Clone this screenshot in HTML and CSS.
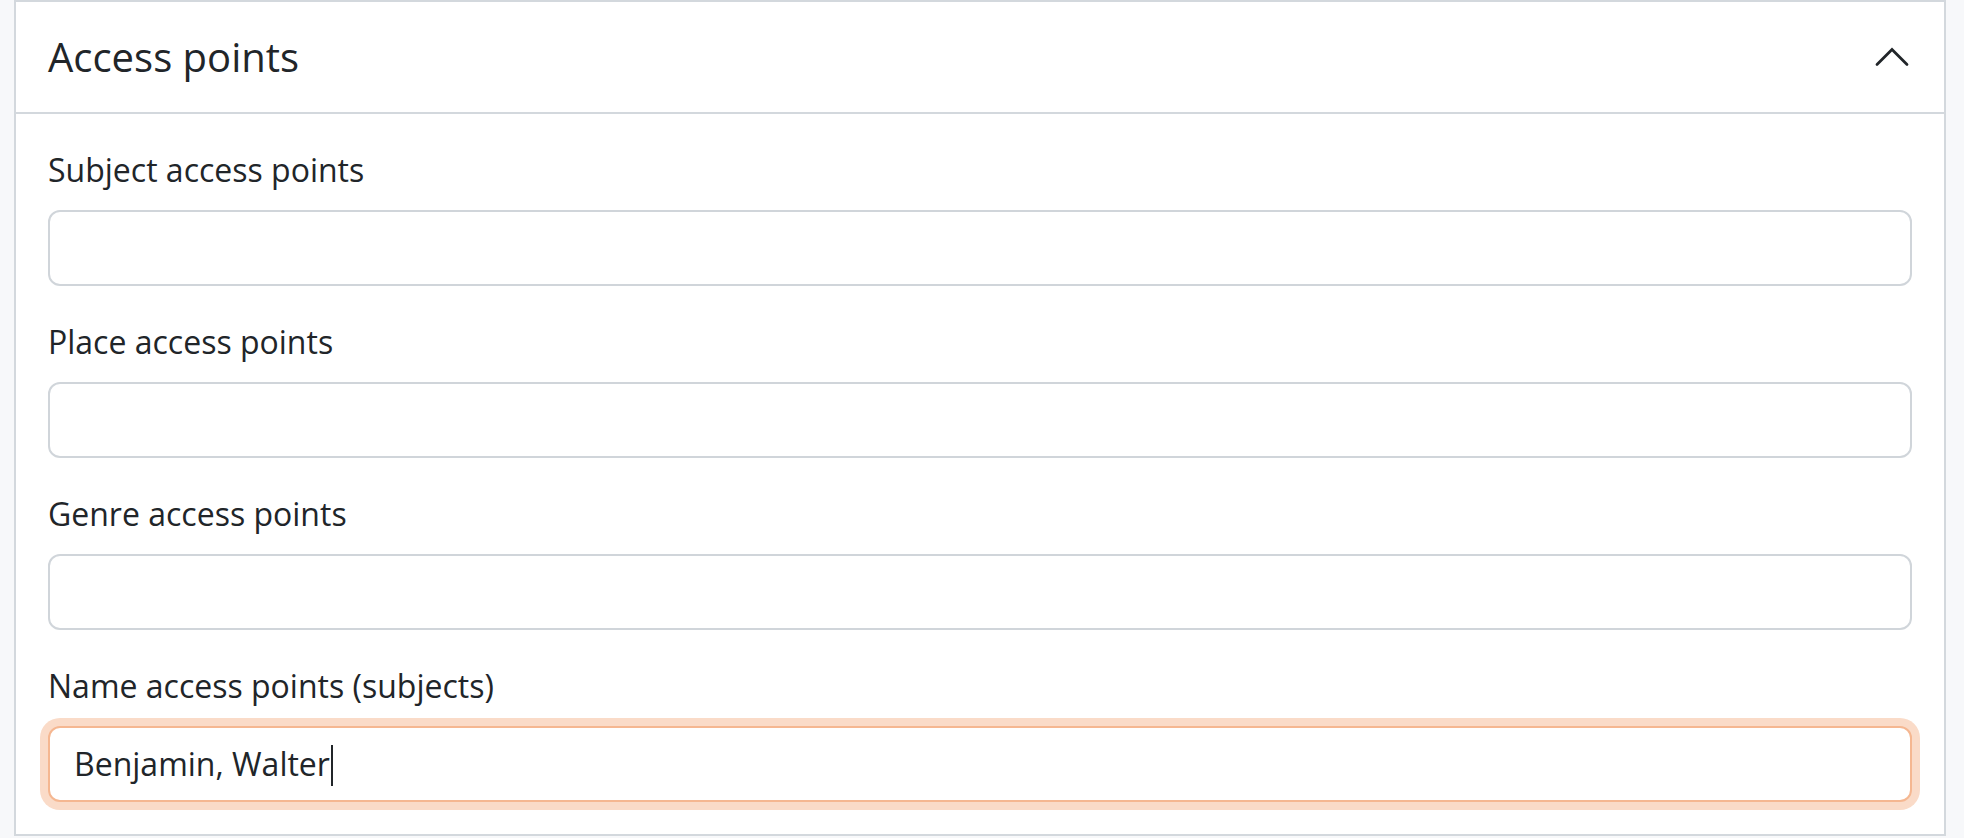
FILE: index.html
```html
<!DOCTYPE html>
<html lang="en">

<head>
    <meta charset="UTF-8">
    <meta name="viewport" content="width=device-width, initial-scale=1.0">
    <title>Access points</title>

    <link rel="stylesheet" href="styles.css">
</head>

<body>
    <!-- Access points section -->
    <section class="panel">
        <div class="panel-header">
            <h2 class="panel-title">Access points</h2>
            <svg class="chevron" viewBox="0 0 16 16" aria-hidden="true">
                <path d="M2 11L8 5L14 11" fill="none" stroke="#212529" stroke-width="1.1" stroke-linecap="round" stroke-linejoin="miter"/>
            </svg>
        </div>

        <div class="panel-body">
            <div class="field">
                <label for="subjects">Subject access points</label>
                <input type="text" id="subjects" class="form-control">
            </div>
            <div class="field">
                <label for="places">Place access points</label>
                <input type="text" id="places" class="form-control">
            </div>
            <div class="field">
                <label for="genres">Genre access points</label>
                <input type="text" id="genres" class="form-control">
            </div>
            <div class="field">
                <label for="names">Name access points (subjects)</label>
                <div id="names" class="form-control focused">Benjamin, Walter<span class="caret"></span></div>
            </div>
        </div>
    </section>
</body>

</html>
```

FILE: styles.css
```css
    body {
        margin: 0;
        padding: 0 18px 0 14px;
        background-color: #f7f8fa;
        font-family: 'Open Sans', 'Noto Sans', sans-serif;
        color: #212529;
    }

    .panel {
        background-color: #ffffff;
        border: 2px solid #d3d8dd;
    }

    .panel-header {
        display: flex;
        align-items: center;
        justify-content: space-between;
        padding: 31px 32px 31px 32px;
        border-bottom: 2px solid #d3d8dd;
    }

    .panel-title {
        margin: 0;
        font-size: 40px;
        font-weight: 400;
        line-height: 48px;
    }

    .chevron {
        width: 40px;
        height: 40px;
        display: block;
    }

/* form fields */
    .panel-body {
        padding: 32px;
    }

    .field {
        margin-bottom: 32px;
    }

    .field:last-child {
        margin-bottom: 0;
    }

    .field label {
        display: block;
        margin-bottom: 16px;
        font-size: 32px;
        line-height: 48px;
    }

    .form-control {
        display: block;
        width: 100%;
        box-sizing: border-box;
        height: 76px;
        padding: 12px 24px;
        font-family: inherit;
        font-size: 32px;
        line-height: 48px;
        color: #212529;
        background-color: #ffffff;
        border: 2px solid #d0d5da;
        border-radius: 12px;
        outline: none;
    }

    .form-control.focused {
        border-color: #f5b791;
        box-shadow: 0 0 0 8px #fadbc8;
    }

    .caret {
        display: inline-block;
        width: 2px;
        height: 41px;
        margin-left: 1px;
        vertical-align: -10px;
        background-color: #212529;
    }
```
